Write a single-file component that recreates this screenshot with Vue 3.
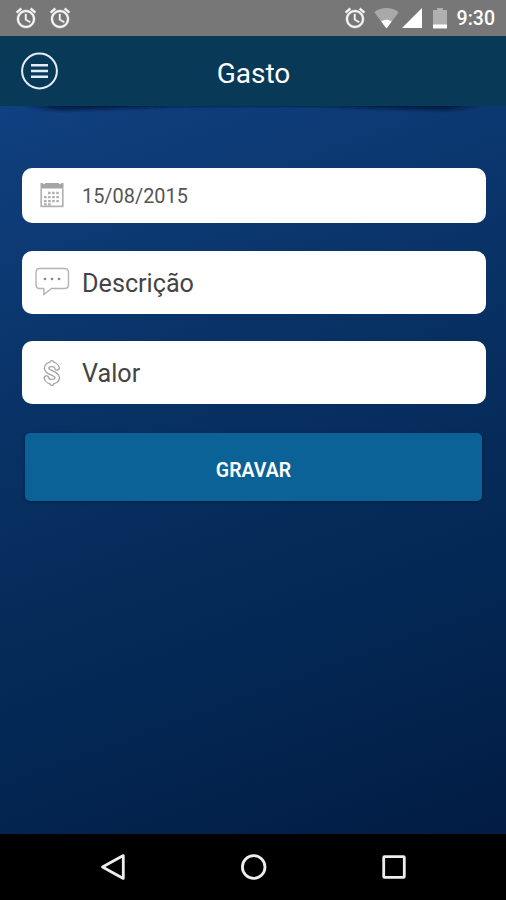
<template>
  <div class="screen">
    <div class="status-bar">
      <svg v-for="n in 2" :key="n" class="alarm" viewBox="0 0 24 24"><path :d="alarmPath" /></svg>
      <div class="status-right">
        <svg class="alarm" viewBox="0 0 24 24"><path :d="alarmPath" /></svg>
        <svg class="wifi" viewBox="0 0 25 21">
          <path d="M.3 4.2C7.5-1.4 17.5-1.4 24.7 4.2L12.5 20.5z" fill="#a9a9a9" />
          <path d="M7.3 13.4c3-2.2 7.4-2.2 10.4 0l-5.2 7.1z" fill="#fff" />
        </svg>
        <svg class="signal" viewBox="0 0 20 20"><path d="M20 0v20H0z" fill="#fff" /></svg>
        <svg class="battery" viewBox="0 0 14 21">
          <path d="M4 0h6v2h4v15H0V2h4z" fill="#b0b0b0" />
          <path d="M0 16.5h14V20.5H0z" fill="#fff" />
        </svg>
        <span class="time">9:30</span>
      </div>
    </div>

    <header class="header">
      <svg class="menu" viewBox="0 0 38 38">
        <circle cx="19.5" cy="19" r="17.4" />
        <path d="M11 13.2h17M11 19h17M11 24.8h17" />
      </svg>
      <h1 class="title">Gasto</h1>
      <span class="spacer"></span>
    </header>

    <main class="content">
      <!-- curled shadow under the header -->
      <svg class="header-shadow" viewBox="0 0 506 16">
        <defs>
          <filter id="soft" x="-5%" y="-100%" width="110%" height="300%">
            <feGaussianBlur stdDeviation="9 1.5" />
          </filter>
        </defs>
        <path d="M14-8H492L455 4.5Q400 3.5 330 0.5Q253-.5 176 0.5Q106 3.5 51 4.5z" filter="url(#soft)" />
      </svg>

      <div class="field field-date">
        <svg class="icon" viewBox="0 0 36 36">
          <path d="M6.5 6h2.2q1.3 2.6 2.6 0h13.4q1.3 2.6 2.6 0h2.2v5.5h-23z" fill="#a5a5a5" />
          <path d="M7.2 11.5v17.8h21.6v-17.8" fill="none" stroke="#b2b2b2" stroke-width="1.7" />
          <path d="M14 16h12.4M10 20.2h16.4M10 24.2h16.4M10 27.3h8" fill="none" stroke="#b0b0b0" stroke-width="2.3" stroke-dasharray="2.6 1.5" />
        </svg>
        <span>15/08/2015</span>
      </div>

      <div class="field">
        <svg class="icon" viewBox="0 0 36 36">
          <path d="M5.5 4.5h25q4 0 4 4v12q0 4-4 4H17.5L9.8 30.5V24.5H5.5q-3.500 0-3.500-4V8.5q0-4 3.500-4z" fill="none" stroke="#b4b4b4" stroke-width="1.4" />
          <g fill="#858585">
            <circle cx="11" cy="15" r="1.3" />
            <circle cx="18" cy="15" r="1.3" />
            <circle cx="25" cy="15" r="1.3" />
          </g>
        </svg>
        <span>Descrição</span>
      </div>

      <div class="field">
        <svg class="icon" viewBox="0 0 36 36">
          <g fill="none" stroke-linejoin="round" stroke-linecap="round">
            <path :d="dollarPath" stroke="#a2a2a2" stroke-width="5.8" />
            <path d="M17.8 7.5v2M17.8 27v1.5" stroke="#a2a2a2" stroke-width="5" />
            <path :d="dollarPath" stroke="#fff" stroke-width="3.2" />
            <path d="M17.8 7.5v2M17.8 26v2.5" stroke="#fff" stroke-width="2.6" />
          </g>
        </svg>
        <span>Valor</span>
      </div>

      <button class="save">GRAVAR</button>
    </main>

    <nav class="nav-bar">
      <svg viewBox="0 0 28 28"><path d="M24.3 2.6v22.8L3.5 14z" /></svg>
      <svg viewBox="0 0 28 28"><circle cx="13.7" cy="14" r="11.3" /></svg>
      <svg viewBox="0 0 28 28"><rect x="3.7" y="3.7" width="20.6" height="20.6" rx=".8" /></svg>
    </nav>
  </div>
</template>

<script setup>
const alarmPath =
  'M22 5.72l-4.6-3.86-1.29 1.53 4.6 3.86L22 5.72zM7.88 3.39L6.6 1.86 2 5.71l1.29 1.53 4.59-3.85zM12.5 8H11v6l4.75 2.85.75-1.23-4-2.37V8zM12 4c-4.97 0-9 4.03-9 9s4.02 9 9 9c4.97 0 9-4.03 9-9s-4.03-9-9-9zm0 16c-3.87 0-7-3.13-7-7s3.13-7 7-7 7 3.13 7 7-3.13 7-7 7z'

// centre line of the dollar sign, stroked twice to get an outline
const dollarPath = 'M23 12.8C22 8.2 12.600 8.2 12.600 13.2C12.600 18.300 23.200 17.500 23.200 22.800C23.200 27.800 13.200 27.800 12.500 23.200'
</script>

<style>
body {
  margin: 0;
  background: #000;
}
</style>

<style scoped>
.screen {
  width: 506px;
  height: 900px;
  display: flex;
  flex-direction: column;
  overflow: hidden;
  font-family: Roboto, 'Liberation Sans', sans-serif;
}

.status-bar {
  height: 36px;
  flex-shrink: 0;
  box-sizing: border-box;
  padding: 0 11px 0 14px;
  display: flex;
  align-items: center;
  gap: 10px;
  background: #777;
}

.alarm {
  width: 24px;
  height: 24px;
  fill: #f5f5f5;
  stroke: #f5f5f5;
  stroke-width: 0.4;
}

.status-right {
  margin-left: auto;
  display: flex;
  align-items: center;
}

.wifi {
  width: 25px;
  height: 21px;
  margin-left: 7px;
}

.signal {
  width: 20px;
  height: 20px;
  margin-left: 3px;
}

.battery {
  width: 14px;
  height: 21px;
  margin: 0 10px 0 11px;
}

.time {
  padding-top: 2px;
  font-size: 19.5px;
  font-weight: 500;
  line-height: 36px;
  color: #fff;
}

.header {
  height: 70px;
  flex-shrink: 0;
  box-sizing: border-box;
  padding: 0 20px;
  display: flex;
  align-items: center;
  justify-content: space-between;
  background: #083a58;
  position: relative;
  z-index: 1;
}

.menu,
.spacer {
  width: 38px;
  height: 38px;
}

.menu {
  fill: none;
  stroke: #e6ebf8;
  stroke-width: 2;
}

.menu path {
  stroke-width: 2.6;
}

.title {
  margin: 6px 0 0 1px;
  font-size: 28px;
  font-weight: 400;
  line-height: 36px;
  color: #fff;
}

.content {
  flex: 1;
  box-sizing: border-box;
  padding: 61.5px 20px 0 21.5px;
  position: relative;
  display: flex;
  flex-direction: column;
  gap: 27.5px;
  background: linear-gradient(160deg, #104080 0%, #072f60 44%, #032753 72%, #021c44 100%);
}

.header-shadow {
  position: absolute;
  top: 0;
  left: 0;
  width: 506px;
  height: 16px;
  fill: rgba(2, 20, 45, 0.7);
}

.field {
  height: 63px;
  box-sizing: border-box;
  padding-left: 12px;
  display: flex;
  align-items: center;
  gap: 12.5px;
  border-radius: 10px;
  background: #fff;
  color: #444;
  font-size: 25.2px;
}

.field span {
  padding-top: 2px;
}

.field-date {
  height: 55.5px;
  font-size: 19.9px;
  color: #555;
}

.icon {
  width: 36px;
  height: 36px;
}

.save {
  height: 68.5px;
  margin: 1px 4px 0 3.5px;
  padding: 7px 0 0;
  border: 0;
  border-radius: 5px;
  background: #0b6296;
  box-shadow: 0 1px 3px rgba(0, 15, 40, 0.5);
  color: #fff;
  font-family: inherit;
  font-size: 19.5px;
  font-weight: 600;
}

.nav-bar {
  height: 66.5px;
  flex-shrink: 0;
  box-sizing: border-box;
  padding: 0 98px 0 99px;
  display: flex;
  align-items: center;
  justify-content: space-between;
  background: #000;
}

.nav-bar svg {
  width: 28px;
  height: 28px;
  fill: none;
  stroke: #eee;
  stroke-width: 2.8;
  stroke-linejoin: round;
}
</style>
